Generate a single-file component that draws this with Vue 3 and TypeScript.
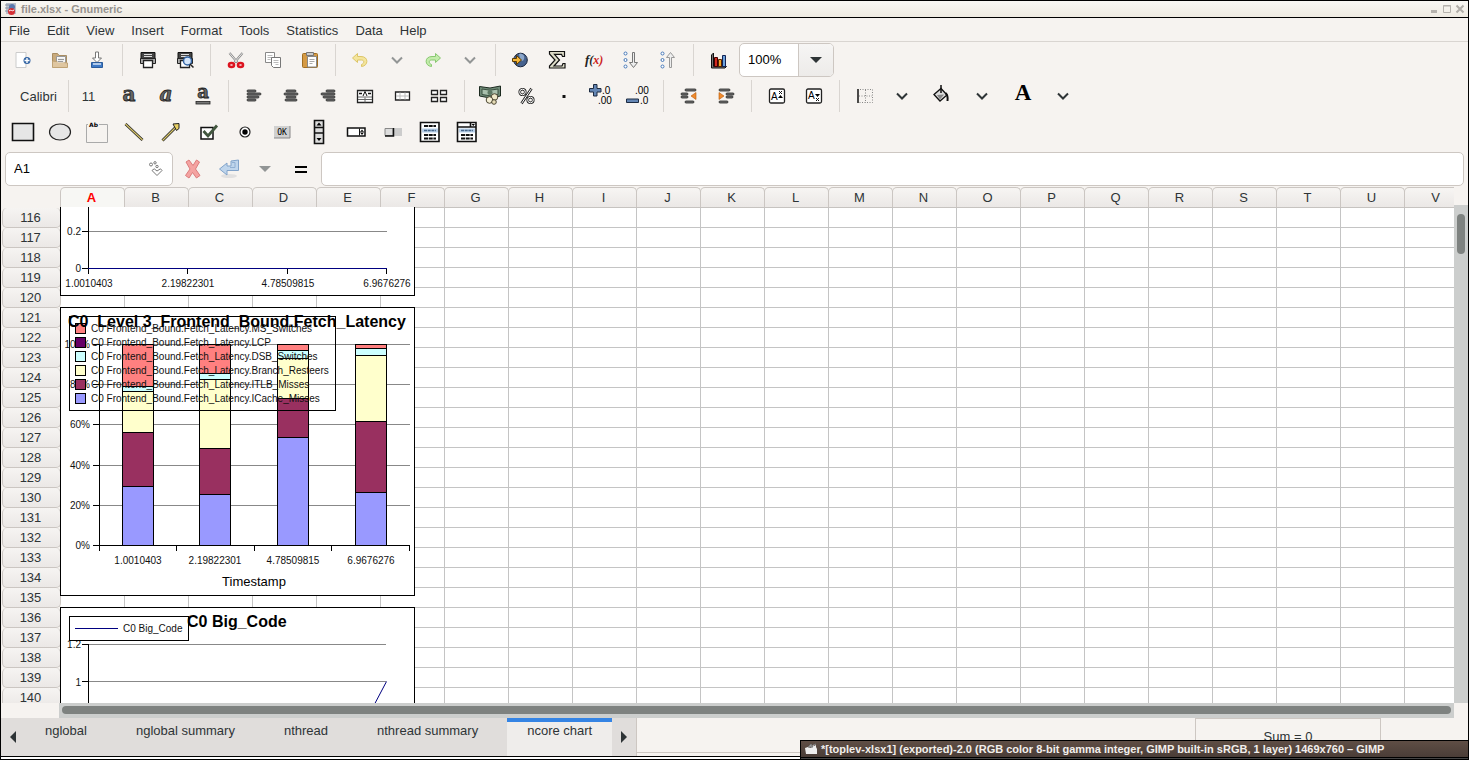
<script setup lang="ts">
interface Tool {
  kind: 'button' | 'sep' | 'text'
  label?: string
  icon?: string
  size?: string
}

const b = (label: string, icon: string, size = ''): Tool => ({ kind: 'button', label, icon, size })
const t = (label: string, size: string): Tool => ({ kind: 'text', label, size })
const sep: Tool = { kind: 'sep' }

const menus = ['File', 'Edit', 'View', 'Insert', 'Format', 'Tools', 'Statistics', 'Data', 'Help']

const chevron = (color: string) => `<path d="M7 9.500 12 14.500 17 9.500" fill="none" stroke="${color}" stroke-width="2"/>`
const lines = (rows: number[][]) =>
  rows.map(([x, y, w]) => `<rect x="${x}" y="${y}" width="${w}" height="2" rx="1" fill="#777" stroke="#222" stroke-width=".8"/>`).join('')
const printer = '<path d="M5 4.500h14v7H5z" fill="#444" stroke="#111"/><path d="M8 6.500h8M8 8.500h8" stroke="#ddd"/><path d="M4.500 10.500h15v5h-15z" fill="#aaa" stroke="#222"/><path d="M7.500 12.500h9v7h-9z" fill="#fff" stroke="#222" stroke-width="1.300"/>'
const glyph = (size: number, y: number, attrs = '') =>
  `<text x="12" y="${y}" text-anchor="middle" font-family="DejaVu Serif" font-weight="bold" font-size="${size}" fill="#666" stroke="#222" stroke-width=".8" ${attrs}>a</text>`

const standardTools: Tool[] = [
  b('New', '<path d="M5 4.500h10v15H5z" fill="#fff" stroke="#ccc"/><path d="M15 7v12" stroke="#ddd"/><circle cx="16" cy="12.500" r="3.500" fill="#3465a4"/><path d="M13.500 12.500h5M16 10v5" stroke="#fff" stroke-width="1.400"/>'),
  b('Open', '<path d="M4.500 19V5.500h5l1.500 2h7.500V19z" fill="#c9aa7c" stroke="#a98d62"/><path d="M8.500 8.500h9v7h-9z" fill="#fff" stroke="#999"/><path d="M10 11h6M10 13h5" stroke="#999"/><path d="M4.500 19.500V13l15 2v4.500z" fill="#dfc6a0" stroke="#bfa274"/><path d="M9.500 9.500h7v5h-7z" fill="#eee"/><path d="M10 11.500h6M10 13.500h5" stroke="#999"/>'),
  b('Save', '<path d="M10.500 4h3v6h3L12 14.500 7.500 10h3z" fill="#fff" stroke="#777"/><path d="M6.500 14.500h11v5h-11z" fill="#3f79c5" stroke="#2c5c9c"/><path d="M8 16h8" stroke="#d7e5f5" stroke-width="1.500"/>'),
  sep,
  b('Print', printer),
  b('Print preview', printer + '<circle cx="14.500" cy="13" r="4" fill="#d5e6fa" stroke="#3465a4" stroke-width="1.500"/><path d="m17 16 3.500 3.500" stroke="#222" stroke-width="1.500"/>'),
  sep,
  b('Cut', '<path d="m5.500 5 8 9.500M18.500 5l-8 9.500" stroke="#888" stroke-width="2.200"/><path d="m5.500 5 8 9.500M18.500 5l-8 9.500" stroke="#fff" stroke-width=".8"/><ellipse cx="7.500" cy="17" rx="2.600" ry="2" fill="none" stroke="#dc1420" stroke-width="2.400"/><ellipse cx="16.500" cy="17" rx="2.600" ry="2" fill="none" stroke="#dc1420" stroke-width="2.400"/>'),
  b('Copy', '<path d="M4.500 4.500h9v10h-9z" fill="#fff" stroke="#888"/><path d="M6.500 7.500h5M6.500 9.500h5M6.500 11.500h3" stroke="#bbb"/><path d="M10.500 9.500h9v10h-7l-2-2z" fill="#fff" stroke="#777"/><path d="M12.500 12.500h5M12.500 14.500h5M14.500 16.500h3" stroke="#bbb"/>'),
  b('Paste', '<rect x="4.500" y="5.500" width="15" height="14" rx="1" fill="#d59a44" stroke="#a06e22"/><path d="M8.500 4.500h7v3h-7z" fill="#ccc" stroke="#777"/><path d="M9.500 8.500h9v10.500h-9z" fill="#fff" stroke="#888"/><path d="M11.500 11.500h5M11.500 13.500h5M11.500 15.500h3" stroke="#aaa"/>'),
  sep,
  b('Undo', '<path d="M9.500 5.500 4.500 10l5 4.500V12h4c3 0 3 3.500 0 4.500v2c7-.5 7.500-10-.5-10H9.500z" fill="#f4e59c" stroke="#dcc568"/>', 'w36'),
  b('Undo history', chevron('#929595')),
  b('Redo', '<path d="m14.500 5.500 5 4.500-5 4.500V12h-4c-3 0-3 3.500 0 4.500v2c-7-.5-7.500-10 .5-10h3.500z" fill="#c3ecab" stroke="#88c870"/>', 'w36'),
  b('Redo history', chevron('#929595')),
  sep,
  b('Hyperlink', '<circle cx="12.500" cy="12" r="6.800" fill="#46628e" stroke="#16233c"/><path d="M11 6c4-1 6 2 5 5s-3 2-4 0z" fill="#8ba6ca"/><path d="M4.500 10.500h4v-3l5 4.500-5 4.500v-3h-4z" fill="#f6b73a" stroke="#5b3a00"/>', 'w36'),
  b('Sum', '<path d="M4.500 3.500h15v5h-2l-1-2.200H9.500l5 5.700-5.500 6h8l1-2.500h2v4.500H4.500v-2l5.500-6-5.500-6z" fill="#dddcc8" stroke="#111" stroke-width="1.200"/>'),
  b('Function', '<text x="3" y="16" font-family="Liberation Serif" font-style="italic" font-weight="bold" font-size="13" fill="#222">f<tspan font-size="12">(</tspan><tspan fill="#c22" font-size="12">x</tspan><tspan font-size="12" fill="#c22">)</tspan></text>'),
  b('Sort ascending', '<g fill="#fff" stroke="#4778b8"><circle cx="6.500" cy="5.500" r="1.500"/><circle cx="6.500" cy="12" r="1.500"/><circle cx="6.500" cy="18.500" r="1.500"/></g><path d="M13.500 4.500h2v10h3L14.500 19.500l-4-5h3z" fill="#eee" stroke="#777"/>'),
  b('Sort descending', '<g fill="#fff" stroke="#4778b8"><circle cx="6.500" cy="5.500" r="1.500"/><circle cx="6.500" cy="12" r="1.500"/><circle cx="6.500" cy="18.500" r="1.500"/></g><path d="M13.500 19.500h2v-10h3l-4-5-4 5h3z" fill="#eee" stroke="#999"/>'),
  sep,
  b('Chart', '<path d="M4.500 7 6.500 5v13.500h13l-1.500 1.500H4.500z" fill="#777" stroke="#111"/><path d="M7.500 9.500h3v9h-3z" fill="#d22a20" stroke="#400"/><path d="M11.500 11.500h3v7h-3z" fill="#f0a425" stroke="#520"/><path d="M15.500 7.500h3v11h-3z" fill="#6da3dc" stroke="#125"/>'),
]

const chevDark = chevron('#2e3436')
const formatTools: Tool[] = [
  t('Calibri', 'w57'), sep, t('11', 'w35'),
  b('Bold', glyph(20, 17)),
  b('Italic', glyph(20, 17, 'font-style="italic"')),
  b('Underline', glyph(18, 14) + '<rect x="5" y="17.500" width="14" height="2.500" fill="#777" stroke="#222" stroke-width=".8"/>'),
  sep,
  b('Align left', lines([[5, 6, 9], [5, 9, 14], [5, 12, 12], [5, 15, 9]])),
  b('Center', lines([[7, 6, 10], [5, 9, 14], [7, 12, 10], [6, 15, 12]])),
  b('Align right', lines([[10, 6, 9], [5, 9, 14], [7, 12, 12], [10, 15, 9]])),
  b('Center across selection', '<path d="M4.500 6.500h15v12h-15z" fill="#fff" stroke="#222" stroke-width="1.300"/><path d="M5 13h14M5 15.500h14M12 13.500v5" stroke="#666"/><path d="M6 9.500h3M15 9.500h3" stroke="#111" stroke-width="1.500"/><path d="m10 12 2-4.500 2 4.500" fill="none" stroke="#111"/>'),
  b('Merge cells', '<path d="M5.500 8h14v8h-14z" fill="#fff" stroke="#222" stroke-width="1.300"/><path d="M6 12h13M10 8.500v7M15 8.500v7" stroke="#bbb"/>'),
  b('Split cells', '<path d="M4.500 6.500h6v4h-6zM13.500 6.500h6v4h-6zM4.500 13.500h6v4h-6zM13.500 13.500h6v4h-6z" fill="#fff" stroke="#222" stroke-width="1.300"/>'),
  sep,
  b('Format as money', '<path d="M1.500 2.500 12 4l10.500-2v10L12 14 1.500 12z" fill="#6f8a77" stroke="#1c2a20"/><path d="m4 5 8 1.200L20 5v5.500l-8 1.300-8-1.300z" fill="#a9c0ad" stroke="#3a5040"/><circle cx="12" cy="8.500" r="2.500" fill="#5d7763"/><circle cx="16.500" cy="13" r="3.300" fill="#efe8c8" stroke="#4b4632"/><circle cx="11.500" cy="16" r="3.300" fill="#f5efd5" stroke="#4b4632"/><circle cx="16" cy="18" r="2.300" fill="#e6dcb6" stroke="#4b4632"/>'),
  b('Format as percent', '<g fill="none" stroke="#222" stroke-width="2.600"><circle cx="7.500" cy="8" r="2.800"/><circle cx="15.500" cy="16" r="2.800"/><path d="M16.500 4.500 6.500 19.500"/></g><g fill="none" stroke="#fff" stroke-width="1"><circle cx="7.500" cy="8" r="2.800"/><circle cx="15.500" cy="16" r="2.800"/><path d="M16.500 4.500 6.500 19.500"/></g>'),
  b('Thousands separator', '<path d="M10.500 11h3v3h-3z" fill="#111"/>'),
  b('More precision', '<path d="M4.500.5h3.500v4h4v3.500H8v4H4.500V8h-4V4.500h4z" fill="#6486b4" stroke="#1c2b42"/><text x="13" y="10" font-family="Liberation Sans" font-size="10" fill="#000">.0</text><text x="9" y="20" font-family="Liberation Sans" font-size="10" fill="#000">.00</text>'),
  b('Less precision', '<text x="9" y="10" font-family="Liberation Sans" font-size="10" fill="#000">.00</text><text x="14" y="20" font-family="Liberation Sans" font-size="10" fill="#000">.0</text><path d="M.5 15h12v3.500H.5z" fill="#6486b4" stroke="#1c2b42"/>'),
  sep,
  b('Decrease indent', lines([[8, 5, 11], [4, 9, 7], [4, 12, 7], [8, 17, 9]]) + '<path d="M19 8.500v7L14 12z" fill="#f08a2c" stroke="#b75706" stroke-width=".6"/>'),
  b('Increase indent', lines([[5, 5, 11], [12, 9, 8], [12, 12, 7], [5, 17, 9]]) + '<path d="M5 8.500v7l5-3.500z" fill="#f08a2c" stroke="#b75706" stroke-width=".6"/>'),
  sep,
  b('Superscript', '<rect x="4.500" y="5" width="15" height="14" rx="1.500" fill="#fff" stroke="#222" stroke-width="1.300"/><text x="6" y="16" font-family="Liberation Sans" font-size="10">A</text><path d="m14 7 3 3m0-3-3 3" stroke="#111"/><path d="M13 14l2.500-3 2.500 3z"/>'),
  b('Subscript', '<rect x="4.500" y="5" width="15" height="14" rx="1.500" fill="#fff" stroke="#222" stroke-width="1.300"/><text x="6" y="15" font-family="Liberation Sans" font-size="10">A</text><path d="m14 14 3 3m0-3-3 3" stroke="#111"/><path d="M13 10l2.500 3 2.500-3z"/>'),
  sep,
  b('Borders', '<path d="M5 5v14" stroke="#111" stroke-width="1.500"/><path d="M7 5.500h12.500v13H6M6 12h13M12.500 6v13" fill="none" stroke="#888" stroke-dasharray="1 1.500"/>'),
  b('Border styles', chevDark),
  b('Background', '<path d="m5 10.500 7-6 6 6.500-7 6z" fill="#ddd" stroke="#111" stroke-width="1.300"/><path d="m8 11 7-.5-4 5z" fill="#888"/><path d="M12 1v8" stroke="#111" stroke-width="1.500"/><path d="M16.500 9c2.500 2 2.500 4 2 8" fill="none" stroke="#111" stroke-width="2"/>', 'w42'),
  b('Background colors', chevDark, 'w40'),
  b('Font color', '<text x="12" y="16" text-anchor="middle" font-family="Liberation Serif" font-weight="bold" font-size="23" fill="#000">A</text>', 'w41'),
  b('Font colors', chevDark, 'w40'),
]

const objectTools: Tool[] = [
  b('Rectangle', '<path d="M1.500 3.500h21v17h-21z" fill="#e6e6e6" stroke="#111" stroke-width="1.600"/>'),
  b('Ellipse', '<ellipse cx="12" cy="12" rx="10.500" ry="8" fill="#e6e6e6" stroke="#222" stroke-width="1.200"/>'),
  b('Frame', '<path d="M3 4.500H1.500v18h21v-18H14" fill="none" stroke="#aaa"/><text x="4" y="7" font-family="DejaVu Sans" font-weight="bold" font-size="6">Ab</text>'),
  b('Line', '<path d="m3.500 4 17 16" stroke="#222" stroke-width="2.800"/><path d="m3.500 4 17 16" stroke="#d8c66a" stroke-width="1.200"/>'),
  b('Arrow', '<path d="M3.500 20.500 17 7" stroke="#222" stroke-width="2.800"/><path d="M3.500 20.500 17 7" stroke="#d8c66a" stroke-width="1.200"/><path d="m14 4 6-.500v5l-2.500 2z" fill="#e7cf63" stroke="#222"/>'),
  b('Check box', '<path d="M5 7.500h12v11.500H5z" fill="#fff" stroke="#111" stroke-width="1.500"/><path d="m7.500 11 4.500 5L21 5.500" fill="none" stroke="#42573f" stroke-width="2.800"/>'),
  b('Radio button', '<circle cx="12" cy="12" r="5" fill="#fff" stroke="#222" stroke-width="1.200"/><circle cx="12" cy="12" r="2.700"/>'),
  b('Push button', '<path d="M4 6h16v12H4z" fill="#d0d0d0"/><path d="M4 18h16V6" fill="none" stroke="#888"/><text x="12" y="15" text-anchor="middle" font-family="DejaVu Sans Mono" font-size="8">OK</text>'),
  b('Scrollbar', '<path d="M7.500.5h9v23h-9zM7.500 7.500h9M7.500 13h9" fill="#ddd" stroke="#111" stroke-width="1.600"/><path d="m9.500 5.500 2.500-3 2.500 3zM9.500 18l2.500 3 2.500-3z"/>'),
  b('Spin button', '<path d="M3.500 8h17.500v8H3.500z" fill="#fff" stroke="#111" stroke-width="1.500"/><path d="M15.500 8.500v7M16 12h4" stroke="#111"/><path d="m16.500 11.500 1.500-2 1.500 2zM16.500 13l1.500 2 1.500-2z"/>'),
  b('Slider', '<path d="M4 8h17v8H4z" fill="#ccc"/><path d="M4 15.500V8.500h8v7z" fill="#ddd" stroke="#888"/><path d="M4 16h8.500V8" fill="none" stroke="#111" stroke-width="1.500"/>'),
  b('List', '<path d="M2.500 2.500h18.500v19H2.500z" fill="#fff" stroke="#111" stroke-width="1.600"/><path d="M4 8.500h16v4H4z" fill="#b9d0e8"/><path d="M6 6h12M6 15h12M6 18.500h12" stroke="#111" stroke-width="2" stroke-dasharray="4 .700"/><path d="M6 10.500h12" stroke="#47678c" stroke-width="1.500" stroke-dasharray="3 .700"/>'),
  b('Combo box', '<path d="M2.500 2.500h18.500v19H2.500zM2.500 7H21M15.500 2.500V7" fill="#fff" stroke="#111" stroke-width="1.600"/><path d="m16.500 4 1.800 2L20 4z"/><path d="M4 8.500h16v4H4z" fill="#b9d0e8"/><path d="M6 15h12M6 18.500h12" stroke="#111" stroke-width="2" stroke-dasharray="4 .700"/><path d="M6 10.500h12" stroke="#47678c" stroke-width="1.500" stroke-dasharray="3 .700"/>'),
]

const toolbars = [
  { name: 'Standard toolbar', tools: standardTools, zoom: true },
  { name: 'Format toolbar', tools: formatTools, zoom: false },
  { name: 'Object toolbar', tools: objectTools, zoom: false },
]

const columns = Array.from({ length: 22 }, (_, i) => String.fromCharCode(65 + i))
const rows = Array.from({ length: 25 }, (_, i) => 116 + i)

const colors = ['#ff8080', '#660066', '#ccffff', '#ffffcc', '#993060', '#9999ff']
const legend = ['MS_Switches', 'LCP', 'DSB_Switches', 'Branch_Resteers', 'ITLB_Misses', 'ICache_Misses'].map((name, i) => ({
  name: `C0 Frontend_Bound.Fetch_Latency.${name}`,
  color: colors[i],
  y: 328 + i * 14,
}))

const bars = [
  { x: 122, label: '1.0010403', edges: [344, 386, 391, 432, 486, 545] },
  { x: 199, label: '2.19822301', edges: [344, 373, 379, 448, 494, 545] },
  { x: 277, label: '4.78509815', edges: [344, 350, 358, 398, 437, 545] },
  { x: 355, label: '6.9676276', edges: [344, 348, 355, 421, 492, 545] },
]
const barColors = ['#ff8080', '#ccffff', '#ffffcc', '#993060', '#9999ff']
const percents = ['100%', '80%', '60%', '40%', '20%', '0%'].map((label, i) => ({ label, y: [344, 384, 424, 465, 505, 545][i] }))
const lineLabels = [
  { x: 88, label: '1.0010403' },
  { x: 187, label: '2.19822301' },
  { x: 287, label: '4.78509815' },
  { x: 386, label: '6.9676276' },
]
const tabs = ['nglobal', 'nglobal summary', 'nthread', 'nthread summary', 'ncore chart']
</script>

<template>
  <div class="window">
    <header class="titlebar">
      <svg class="app-icon" viewBox="0 0 12 12" width="12" height="12">
        <path d="M1 0h10v11H1z" fill="#b9bfca" /><path d="M0 2h5M0 5h5M0 8h5" stroke="#8890a0" />
        <circle cx="7" cy="4" r="3" fill="#5978ad" /><circle cx="6.500" cy="8.500" r="3.500" fill="#d43035" /><path d="M4 8c2-2 3 1 5-1" stroke="#fff" fill="none" />
      </svg>
      <span class="title">file.xlsx - Gnumeric</span>
      <button class="win" aria-label="Minimize"><svg viewBox="0 0 10 10" width="10" height="10"><path d="M2 6h6v3H2z" fill="#b5b2ad" /></svg></button>
      <button class="win" aria-label="Maximize"><svg viewBox="0 0 10 10" width="10" height="10"><path d="M1.500 1.500h7v7h-7zM1 2h8" fill="none" stroke="#b5b2ad" /></svg></button>
      <button class="win" aria-label="Close"><svg viewBox="0 0 10 10" width="10" height="10"><path d="m1.500 1.500 7 7m0-7-7 7" stroke="#b0ada8" stroke-width="2" /></svg></button>
    </header>

    <nav class="menubar">
      <button v-for="m in menus" :key="m">{{ m }}</button>
    </nav>

    <div v-for="bar in toolbars" :key="bar.name" class="toolbar" role="toolbar" :aria-label="bar.name">
      <template v-for="(tool, i) in bar.tools" :key="i">
        <span v-if="tool.kind === 'sep'" class="sep"></span>
        <button v-else-if="tool.kind === 'text'" class="tool label" :class="tool.size">{{ tool.label }}</button>
        <button v-else class="tool" :class="tool.size" :aria-label="tool.label">
          <svg viewBox="0 0 24 24" width="24" height="24" v-html="tool.icon"></svg>
        </button>
      </template>
      <div v-if="bar.zoom" class="zoom">
        <input type="text" value="100%" aria-label="Zoom" />
        <button aria-label="Zoom levels"><svg viewBox="0 0 12 6" width="12" height="6"><path d="M0 0h12L6 6z" fill="#2e3436" /></svg></button>
      </div>
    </div>

    <div class="formula">
      <div class="cellname">
        <input type="text" value="A1" aria-label="Cell" />
        <button aria-label="Names">
          <svg viewBox="0 0 16 16" width="16" height="16" fill="none" stroke="#777"><circle cx="3" cy="3.500" r="1.500" /><circle cx="7" cy="1.800" r="1.200" /><circle cx="9" cy="5.500" r="1.200" /><path d="m4 9.500 2.200-1.700L9 10l3.500-2.200L14 9.500l-5 5z" /></svg>
        </button>
      </div>
      <button class="tool" aria-label="Cancel"><svg viewBox="0 0 24 24" width="24" height="24"><path d="m5 5 3-2 4 5.500L15.500 3l3 2-4 7 4.500 6.500-3.500 2.500-4-5.500L8 21l-3.500-2.500L9 12z" fill="#f4a3a1" stroke="#dc7c7c" /></svg></button>
      <button class="tool w36" aria-label="Accept"><svg viewBox="0 0 24 24" width="24" height="24"><ellipse cx="12" cy="19" rx="8" ry="2" fill="#e1e0e0" /><path d="m2.500 12 7.500-6v3h4V4l7.500-1v10.500H10V18z" fill="#bfd5ec" stroke="#81a3ca" /><path d="M15 5.500h3v5h-5" fill="none" stroke="#91b0d3" /></svg></button>
      <button class="tool w35" aria-label="Accept options"><svg viewBox="0 0 12 6" width="12" height="6"><path d="M0 0h12L6 6z" fill="#929595" /></svg></button>
      <button class="tool" aria-label="Enter formula"><svg viewBox="0 0 24 24" width="24" height="24"><path d="M6 9h12v2H6zM6 14h12v2H6z" fill="#000" /></svg></button>
      <input class="entry" type="text" aria-label="Formula" />
    </div>

    <main class="sheet">
      <div class="grid">
        <table>
          <thead>
            <tr>
              <th class="corner"></th>
              <th v-for="c in columns" :key="c" class="col" :class="{ current: c === 'A' }" scope="col"><span>{{ c }}</span></th>
            </tr>
          </thead>
          <tbody>
            <tr v-for="r in rows" :key="r">
              <th class="row" scope="row"><span>{{ r }}</span></th>
              <td v-for="c in columns" :key="c"></td>
            </tr>
          </tbody>
        </table>

        <svg class="charts" viewBox="60 207 356 496" width="356" height="496" shape-rendering="crispEdges" font-family="Liberation Sans, Arial, sans-serif">
          <g stroke="#000" fill="#fff">
            <path d="M60.500 200.500h354v95h-354zM60.500 307.500h354v288h-354zM60.500 607.500h354v110h-354z" />
          </g>

          <g>
            <path d="M88.500 231.500h298" stroke="#888" />
            <path d="M88.500 200v74M82 231.500h6M82 268.500h6M187.500 268v6M287.500 268v6M386.500 268v6" stroke="#000" />
            <path d="M88 268.500h299" stroke="#000080" />
            <g class="tick" text-anchor="end"><text x="81" y="235">0.2</text><text x="81" y="272">0</text></g>
            <g class="tick" text-anchor="middle"><text v-for="l in lineLabels" :key="l.x" :x="l.x + 1" y="287">{{ l.label }}</text></g>
          </g>

          <g>
            <path v-for="p in percents" :key="p.y" :d="`M99 ${p.y}.5h311`" stroke="#888" />
            <path v-for="p in percents" :key="p.label" :d="`M93 ${p.y}.5h6`" stroke="#000" />
            <path d="M99.500 344v207M99 545.500h311M176.500 545v6M254.500 545v6M331.500 545v6M409.500 545v6" stroke="#000" fill="none" />
            <g v-for="bar in bars" :key="bar.x" stroke="#000">
              <rect v-for="(c, i) in barColors" :key="c" :x="bar.x + 0.5" :y="bar.edges[i] + 0.5" width="31" :height="bar.edges[i + 1] - bar.edges[i]" :fill="c" />
            </g>
            <g class="tick" text-anchor="end"><text v-for="p in percents" :key="p.y" x="90" :y="p.y + 4">{{ p.label }}</text></g>
            <g class="tick" text-anchor="middle"><text v-for="bar in bars" :key="bar.x" :x="bar.x + 16" y="564">{{ bar.label }}</text></g>
            <text class="axis" x="254" y="586" text-anchor="middle">Timestamp</text>
            <path d="M69.500 316.500h266v94h-266z" fill="none" stroke="#000" />
            <g v-for="l in legend" :key="l.y">
              <rect x="75.500" :y="l.y - 4.5" width="10" height="10" :fill="l.color" stroke="#000" />
              <text class="tick" x="91" :y="l.y + 4">{{ l.name }}</text>
            </g>
            <text class="head" x="68" y="327">C0&nbsp;&nbsp;Level 3_Frontend_Bound.Fetch_Latency</text>
          </g>

          <g>
            <path d="M88 644.500h298M88 681.500h298" stroke="#888" />
            <path d="M88.500 644v64M82 644.500h6M82 681.500h6" stroke="#000" />
            <path d="M386.500 681.500 372 709" stroke="#000080" shape-rendering="auto" />
            <g class="tick" text-anchor="end"><text x="81" y="648">1.2</text><text x="81" y="686">1</text></g>
            <path d="M69.500 616.500h119v24h-119z" fill="#fff" stroke="#000" />
            <path d="M75 628.500h43" stroke="#000080" />
            <text class="tick" x="123" y="632">C0 Big_Code</text>
            <text class="head" x="187" y="627">C0 Big_Code</text>
          </g>
        </svg>
      </div>
      <div class="vscroll"><span></span></div>
    </main>

    <div class="hscroll"><span></span></div>

    <footer class="bottom">
      <div class="tabs">
        <button class="arrow" aria-label="Previous sheets"><svg viewBox="0 0 6 12" width="6" height="12"><path d="M6 0v12L0 6z" fill="#2e3436" /></svg></button>
        <button v-for="tab in tabs" :key="tab" class="tab" :class="{ active: tab === 'ncore chart' }">{{ tab }}</button>
        <button class="arrow" aria-label="Next sheets"><svg viewBox="0 0 6 12" width="6" height="12"><path d="M0 0v12l6-6z" fill="#2e3436" /></svg></button>
      </div>
      <div class="status"></div>
      <div class="sum">Sum = 0</div>
    </footer>
    <div class="edge"></div>

    <div class="taskbar">
      <svg viewBox="0 0 14 12" width="14" height="12"><path d="M1 5 4 4l3 1 2-3 2 1 1-2v3l1 2v5H2z" fill="#eee" /><path d="M4 4 7 1l2 3zM9 2l3-1" fill="#999" stroke="#777" /></svg>
      <span>*[toplev-xlsx1] (exported)-2.0 (RGB color 8-bit gamma integer, GIMP built-in sRGB, 1 layer) 1469x760 – GIMP</span>
    </div>
  </div>
</template>

<style>
body {
  margin: 0;
}
</style>

<style scoped>
* {
  box-sizing: border-box;
}
.window {
  position: relative;
  display: flex;
  flex-direction: column;
  height: 100vh;
  overflow: hidden;
  background: #f6f3f0;
  border: 1px solid #000;
  font: 13px/16px "Liberation Sans", Arial, sans-serif;
  color: #2e3436;
}
button,
input {
  font: inherit;
  color: inherit;
  border: 0;
  padding: 0;
  margin: 0;
  background: none;
  min-width: 0;
}
svg {
  display: block;
  flex: none;
}
.titlebar {
  display: flex;
  align-items: center;
  height: 17px;
  flex: none;
  padding-left: 4px;
  border-bottom: 1px solid #000;
  background: linear-gradient(#f9f8f4, #efebe2);
}
.title {
  flex: 1;
  margin-left: 4px;
  font-size: 11px;
  font-weight: bold;
  color: #96938f;
}
.win {
  width: 13px;
}
.menubar {
  display: flex;
  gap: 1px;
  flex: none;
  height: 24px;
  border-bottom: 1px solid #d9d5d1;
}
.menubar button {
  padding: 2px 8px 0;
}
.toolbar {
  display: flex;
  align-items: center;
  flex: none;
  height: 36px;
  padding-left: 3px;
}
.tool {
  display: flex;
  align-items: center;
  justify-content: center;
  flex: none;
  width: 37px;
  height: 34px;
}
.tool svg {
  overflow: visible;
}
.w35 { width: 35px; }
.w36 { width: 36px; }
.w40 { width: 40px; }
.w41 { width: 41px; }
.w42 { width: 42px; }
.w57 { width: 57px; }
.label {
  padding-top: 2px;
  padding-left: 12px;
}
.label.w35 {
  padding-left: 0;
  padding-right: 8px;
}
.sep {
  flex: none;
  width: 14px;
  height: 32px;
  background: linear-gradient(#d9d5d1, #d9d5d1) center / 1px 100% no-repeat;
}
.zoom {
  display: flex;
  width: 95px;
  height: 34px;
  margin-left: 2px;
  border: 1px solid #cdc7c2;
  border-radius: 5px;
  background: #fff;
  overflow: hidden;
}
.zoom input {
  width: 58px;
  padding-left: 8px;
  color: #000;
}
.zoom button {
  display: flex;
  flex: 1;
  align-items: center;
  justify-content: center;
  border-left: 1px solid #cdc7c2;
  background: linear-gradient(#f6f5f4, #edebe9);
}
.formula {
  display: flex;
  align-items: center;
  flex: none;
  height: 37px;
  padding: 0 4px;
}
.cellname {
  display: flex;
  align-items: center;
  width: 168px;
  height: 34px;
  margin-right: 1px;
  padding: 0 8px;
  border: 1px solid #cdc7c2;
  border-radius: 5px;
  background: #fff;
}
.cellname input {
  flex: 1;
  color: #000;
}
.entry {
  flex: 1;
  height: 34px;
  margin-left: 2px;
  border: 1px solid #cdc7c2;
  border-radius: 5px;
  background: #fff;
}
.sheet {
  display: flex;
  flex: 1;
  min-height: 0;
}
.grid {
  position: relative;
  flex: 1;
  min-width: 0;
  overflow: hidden;
  background: #fff;
}
table {
  width: 1468px;
  table-layout: fixed;
  border-spacing: 0;
}
th {
  padding: 0;
  font-weight: normal;
}
.corner {
  width: 60px;
  background: #f6f3f0;
}
.col {
  width: 64px;
  height: 21px;
  background: #f6f3f0;
  border-bottom: 1px solid #c6c3c0;
}
.col span {
  display: block;
  height: 20px;
  line-height: 20px;
  margin-left: -1px;
  padding-right: 2px;
  border: 1px solid #cbc6c2;
  border-bottom: 0;
  border-radius: 5px 5px 0 0;
  background: linear-gradient(#f7f5f3, #ebe8e6);
}
.col.current span {
  color: #f00;
  font-weight: bold;
  background: #f7f7f4;
}
.row {
  height: 20px;
  background: #f6f3f0;
}
.row span {
  display: block;
  height: 20px;
  line-height: 19px;
  margin-left: 1px;
  padding-right: 2px;
  border: 1px solid #cbc6c2;
  border-top: 0;
  border-radius: 5px;
  background: linear-gradient(#f6f4f2, #ebe8e6);
}
td {
  padding: 0;
  border-right: 1px solid #c4c4c4;
  border-bottom: 1px solid #c4c4c4;
}
.charts {
  position: absolute;
  left: 59px;
  top: 20px;
}
.tick {
  font-size: 10px;
  fill: #111;
}
.axis {
  font-size: 13px;
}
.head {
  font-size: 16px;
  font-weight: bold;
}
.vscroll {
  flex: none;
  width: 14px;
  margin-top: 18px;
  padding: 9px 3px;
  background: #cccecd;
}
.vscroll span {
  display: block;
  height: 40px;
  border-radius: 4px;
  background: #7e8280;
}
.hscroll {
  flex: none;
  height: 15px;
  margin: 0 14px 0 58px;
  padding: 3px 3px 4px;
  background: #cccecd;
}
.hscroll span {
  display: block;
  height: 8px;
  border-radius: 4px;
  background: #7e8280;
}
.bottom {
  display: flex;
  flex: none;
  height: 38px;
}
.tabs {
  display: flex;
  flex: none;
  border-right: 1px solid #cdc7c2;
  background: #e0dddb;
}
.arrow {
  display: flex;
  align-items: center;
  justify-content: center;
  width: 24px;
}
.tab {
  display: flex;
  margin-right: 9px;
  padding: 5px 20px 0;
}
.tab.active {
  margin-right: 0;
  padding-top: 1px;
  border-top: 4px solid #3584e4;
  background: #efedeb;
}
.status {
  flex: 1;
  height: 35px;
  border-bottom: 1px solid #cdc7c2;
}
.sum {
  width: 186px;
  margin-right: 87px;
  padding-top: 10px;
  border: 1px solid #cdc7c2;
  border-bottom: 0;
  text-align: center;
}
.edge {
  flex: none;
  height: 3px;
  border-top: 1px solid #000;
  background: #fff;
}
.taskbar {
  position: absolute;
  right: -1px;
  bottom: -1px;
  width: 669px;
  height: 20px;
  display: flex;
  align-items: center;
  gap: 3px;
  padding: 0 3px 4px;
  border: 1px solid #000;
  border-width: 1px 0 0 1px;
  background: linear-gradient(#5f4e45, #4a3d37 16px, #000 16px, #000 17px, #444 17px);
  font-size: 11px;
  font-weight: bold;
  color: #f2efec;
  white-space: nowrap;
}
</style>
